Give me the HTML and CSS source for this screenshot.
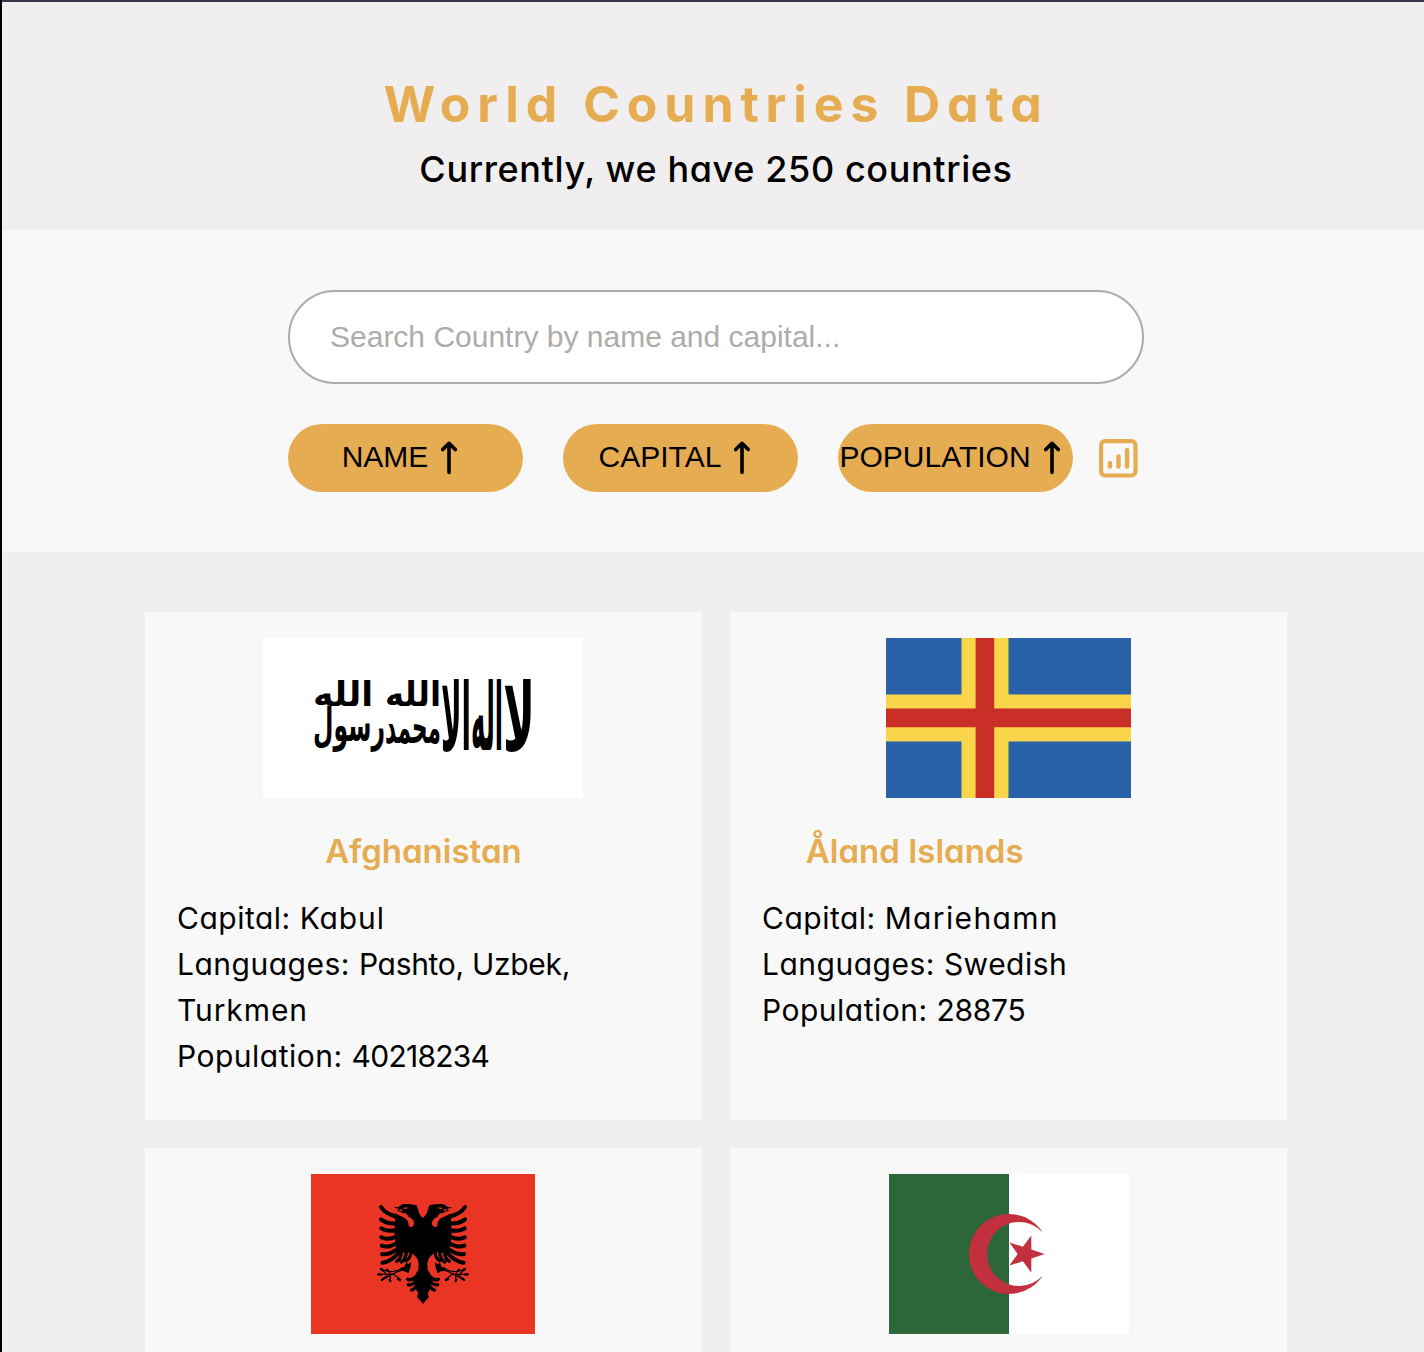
FILE: index.html
```html
<!DOCTYPE html>
<html lang="en">
<head>
<meta charset="utf-8">
<title>World Countries Data</title>
<link rel="stylesheet" href="styles.css">
</head>
<body>
<svg class="defs" width="0" height="0" aria-hidden="true">
  <symbol id="arrow-up" viewBox="0 0 16 34"><path d="M8 31.5V2.5M1.7 8.6L8 2.3L14.3 8.6" fill="none" stroke="currentColor" stroke-width="3.6" stroke-linecap="round" stroke-linejoin="round"/></symbol>
</svg>
<div class="page">
  <header class="header">
    <h1 class="title">World Countries Data</h1>
    <p class="subtitle">Currently, we have 250 countries</p>
  </header>
  <section class="controls">
    <input class="search" type="text" placeholder="Search Country by name and capital...">
    <div class="buttons">
      <button class="sort">NAME <svg class="arrow"><use href="#arrow-up"/></svg></button>
      <button class="sort">CAPITAL <svg class="arrow"><use href="#arrow-up"/></svg></button>
      <button class="sort">POPULATION <svg class="arrow"><use href="#arrow-up"/></svg></button>
      <svg class="chart" viewBox="0 0 39 39" fill="none" stroke="currentColor" stroke-linecap="round">
        <rect x="2.1" y="2.1" width="34.4" height="34.4" rx="4" stroke-width="4.2"/>
        <path d="M11 24V27.5M19.5 17.5V27.5M28.1 11V27.5" stroke-width="4.4"/>
      </svg>
    </div>
  </section>
  <main class="countries">
    <article class="card">
      <svg class="flag flag-left" width="320" height="160" viewBox="0 0 320 160">
        <rect width="320" height="160" fill="#fff"/>
        <g class="calligraphy" direction="rtl">
          <text x="272" y="112" font-size="94" textLength="32" lengthAdjust="spacingAndGlyphs">لا</text>
          <text x="240" y="112" font-size="94" textLength="32" lengthAdjust="spacingAndGlyphs">اله</text>
          <text x="208" y="112" font-size="94" textLength="30" lengthAdjust="spacingAndGlyphs">الا</text>
          <text x="178" y="68" font-size="34" textLength="56" lengthAdjust="spacingAndGlyphs">الله</text>
          <text x="178" y="105" font-size="46" textLength="56" lengthAdjust="spacingAndGlyphs">محمد</text>
          <text x="122" y="103" font-size="46" textLength="72" lengthAdjust="spacingAndGlyphs">رسول</text>
          <text x="110" y="68" font-size="34" textLength="60" lengthAdjust="spacingAndGlyphs">الله</text>
        </g>
      </svg>
      <div class="details">
        <h2 class="name">Afghanistan</h2>
        <p><span class="label">Capital: </span><span class="value">Kabul</span></p>
        <p><span class="label">Languages: </span><span class="list">Pashto, Uzbek,</span> <span class="value">Turkmen</span></p>
        <p><span class="label">Population: </span><span class="number">40218234</span></p>
      </div>
    </article>
    <article class="card">
      <svg class="flag" width="245" height="160" viewBox="0 0 245 160">
        <rect width="245" height="160" fill="#2962a9"/>
        <path d="M75.5 0H122.5V56.4H245V103.4H122.5V160H75.5V103.4H0V56.4H75.5Z" fill="#f8d54a"/>
        <path d="M89.6 0H108.2V70.6H245V89.3H108.2V160H89.6V89.3H0V70.6H89.6Z" fill="#c92f27"/>
      </svg>
      <div class="details">
        <h2 class="name">Åland Islands</h2>
        <p><span class="label">Capital: </span><span class="wide">Mariehamn</span></p>
        <p><span class="label">Languages: </span><span class="label">Swedish</span></p>
        <p><span class="label">Population: </span><span class="list">28875</span></p>
      </div>
    </article>
    <article class="card">
      <svg class="flag flag-left" width="224" height="160" viewBox="0 0 224 160">
        <rect width="224" height="160" fill="#ea3424"/>
        <defs>
          <g id="eagle-half">
            <path d="M175 85L166 76Q160 66 158 54L154 46Q146 45 139 43L127 42L114 42L105 47L98 52L86 51L93 55L101 56L97 62L103 66L112 65L110 70L121 69Q128 74 130 80Q144 85 147 97Q148 110 137 112Q128 109 130 97Q127 86 111 80L94 72L88 70L90 78L86 80L91 92L88 105L91 120L88 132L91 145L90 160L94 176L92 186L104 188Q114 190 125 186L140 189L150 197L158 208L161 220L160 239L151 254L143 262L149 264L153 278L151 292L157 306L160 308L156 321L175 342Z"/>
            <path d="M106 234L118 230L123 218L131 222L139 216L136 233L130 250L119 244L108 243Z"/>
            <g fill="none" stroke="#000" stroke-linecap="round">
              <path stroke-width="12" d="M48 51Q61 72 95 80M48 88Q65 102 95 100M49 115Q66 127 95 120M49 142Q66 152 95 140M50 167Q70 175 98 158M51 192Q75 196 101 174M52 218Q78 216 103 186"/>
              <path stroke-width="10" d="M95 214Q108 208 109 187M109 216Q122 209 124 187M124 212Q134 207 137 192M128 268Q142 273 156 259M130 284Q144 287 157 268M140 300Q151 297 158 280"/>
              <path stroke-width="3.5" d="M48 238Q84 253 112 234M52 270Q84 249 112 240M38 253H86L107 269M66 254L51 240M67 256L50 270M76 252L67 239M75 273L76 257"/>
              <path stroke-width="7" d="M48 237L53 240M40 253L47 254M51 270L55 266M74 269L76 273M99 267L105 270M66 239L68 242"/>
            </g>
            <path d="M114 54L124 52L131 54L120 57Z" fill="#ea3424"/>
            <path d="M101 59L111 56L113 62L103 65Z" fill="#a8271b"/>
          </g>
        </defs>
        <g transform="translate(54 16) scale(.33333)">
          <use href="#eagle-half"/>
          <use href="#eagle-half" transform="translate(348 0) scale(-1 1)"/>
        </g>
      </svg>
    </article>
    <article class="card">
      <svg class="flag" width="240" height="160" viewBox="0 0 240 160">
        <rect width="240" height="160" fill="#fff"/>
        <rect width="120" height="160" fill="#2c6639"/>
        <path d="M153.8 58.6A40 40 0 1 0 153.8 101.4A32 32 0 1 1 153.8 58.6Z" fill="#c22f3d"/>
        <path d="M155.7 80L142.3 84.4V98.6L133.9 87.2L120.4 91.5L128.7 80L120.4 68.5L133.9 72.8L142.3 61.4V75.6Z" fill="#c22f3d"/>
      </svg>
    </article>
  </main>
</div>
</body>
</html>
```
FILE: styles.css
```css
* { box-sizing: border-box; margin: 0; padding: 0; }
html { height: 100%; overflow: hidden; background: #000; }
body {
  height: 100%;
  overflow: hidden;
  padding-left: 2px;
  font-family: Inter, "Open Sans", sans-serif;
  font-feature-settings: "cv11";
  color: #000;
}
.defs { display: block; }
.page { width: 1428px; height: 100%; overflow: hidden; border-top: 2px solid #363849; background: #f0eeef; }
.header { height: 228px; padding-top: 66px; text-align: center; }
.title { font-size: 50px; line-height: 72px; font-weight: 700; letter-spacing: 6.9px; color: #e6ac52; }
.subtitle { padding-top: 1px; font-size: 36px; line-height: 56px; font-weight: 500; letter-spacing: 0.62px; }
.controls { height: 322px; padding: 60px 286px; background: #f8f8f8; }
.search {
  display: block;
  width: 856px;
  height: 94px;
  padding: 0 40px;
  border: 2px solid #afabab;
  border-radius: 47px;
  background: #fff;
  font: 30px "Liberation Sans", Arial, sans-serif;
}
.search::placeholder { color: #afabab; opacity: 1; }
.buttons { display: flex; align-items: center; gap: 40px; margin-top: 40px; }
.sort {
  display: flex;
  align-items: center;
  justify-content: center;
  gap: 13px;
  width: 235px;
  height: 68px;
  padding: 0 12px 2px 0;
  border: 0;
  border-radius: 34px;
  background: #e6ac52;
  color: #000;
  font: 30px "Liberation Sans", Arial, sans-serif;
  white-space: nowrap;
}
.arrow { flex: none; width: 16px; height: 34px; margin-top: 2px; }
.chart { width: 39px; height: 39px; margin-left: -14px; color: #e6ac52; }
.countries {
  display: grid;
  grid-template-columns: 557px 557px;
  grid-auto-rows: 508px;
  gap: 28px;
  justify-content: center;
  padding-top: 60px;
}
.card { display: flex; flex-direction: column; padding: 26px 32px; background: #f8f8f8; }
.flag { align-self: center; flex: none; }
.flag-left { margin-right: 1px; }
.details { width: fit-content; margin-top: 27px; font-size: 30px; line-height: 46px; }
.name {
  margin-bottom: 18px;
  font-size: 33px;
  line-height: 52px;
  font-weight: 600;
  letter-spacing: 0;
  color: #e6ac52;
  text-align: center;
}
.label { letter-spacing: 0.5px; }
.value { letter-spacing: 0.9px; }
.wide { letter-spacing: 1.35px; }
.list { letter-spacing: -0.3px; }
.number { letter-spacing: -0.75px; }
.calligraphy { font-family: "DejaVu Sans", sans-serif; font-weight: 700; }
```
